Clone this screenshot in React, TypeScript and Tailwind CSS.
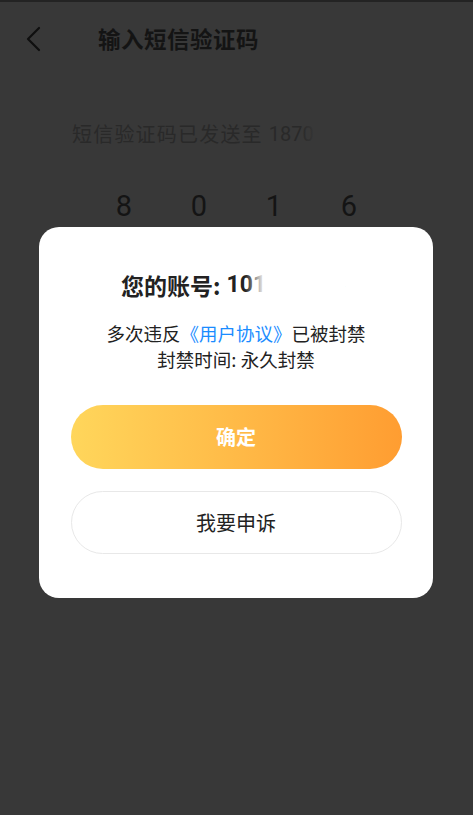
import React from 'react';

const font = { fontFamily: '"Noto Sans CJK SC", Roboto, sans-serif' };

export default function App() {
  return (
    <div className="relative h-[815px] w-full overflow-hidden bg-[#383838] border-t-2 border-[#232323]" style={font}>
      {/* header */}
      <header className="flex items-center h-[78px] pb-[4px]">
        <div className="w-[98px] pl-[25px] flex items-center">
          <svg width="18" height="26" viewBox="0 0 18 26" fill="none">
            <path d="M14 2 L3 13 L14 24" stroke="#0f0f0f" strokeWidth="2.2" strokeLinecap="round" strokeLinejoin="round" />
          </svg>
        </div>
        <h1 className="text-[22.5px] font-bold text-[#141414] tracking-[0.5px]">输入短信验证码</h1>
      </header>

      {/* sent notice */}
      <div className="pl-[72px] mt-[41px] flex items-center h-[26px]">
        <span className="text-[20px] text-[#292929] tracking-[1.2px]">短信验证码已发送至</span>
        <span className="relative ml-[6px] text-[20px] text-[#292929]" style={{ fontFamily: 'Roboto, sans-serif' }}>
          1870
          <span className="absolute inset-y-0 right-[-4px] w-[18px] bg-gradient-to-r from-transparent to-[#383838]" />
        </span>
      </div>

      {/* code digits */}
      <div className="flex pl-[114px] gap-[55px] mt-[38px] text-[29px] text-[#141414]" style={{ fontFamily: 'Roboto, sans-serif' }}>
        <span className="w-[20px] text-center">8</span>
        <span className="w-[20px] text-center">0</span>
        <span className="w-[20px] text-center">1</span>
        <span className="w-[20px] text-center">6</span>
      </div>

      {/* modal */}
      <div className="absolute left-[39px] top-[225px] w-[394px] h-[371px] bg-white rounded-[20px] flex flex-col items-center">
        <div className="mt-[43px] w-full pl-[82px] flex items-center h-[30px]">
          <span className="text-[23px] font-bold text-[#222]">您的账号:</span>
          <span className="relative ml-[6px] text-[23px] font-bold text-[#222]" style={{ fontFamily: 'Roboto, "Noto Sans CJK SC", sans-serif' }}>
            101123456
            <span className="absolute inset-y-0 left-[19px] right-0 bg-gradient-to-r from-transparent via-white via-20% to-white" />
          </span>
        </div>

        <div className="mt-[20px] text-center text-[18.5px] leading-[26px] text-[#222]">
          <p>
            多次违反<span className="text-[#1a8cff]">《用户协议》</span>已被封禁
          </p>
          <p>封禁时间: 永久封禁</p>
        </div>

        <button className="mt-[33px] w-[331px] h-[64px] rounded-full bg-gradient-to-r from-[#ffd65b] to-[#ff9d31] text-white text-[20px] font-bold">
          确定
        </button>

        <button className="mt-[22px] w-[331px] h-[63px] rounded-full border border-[#e8e8e8] bg-white text-[#222] text-[20px]">
          我要申诉
        </button>
      </div>
    </div>
  );
}
